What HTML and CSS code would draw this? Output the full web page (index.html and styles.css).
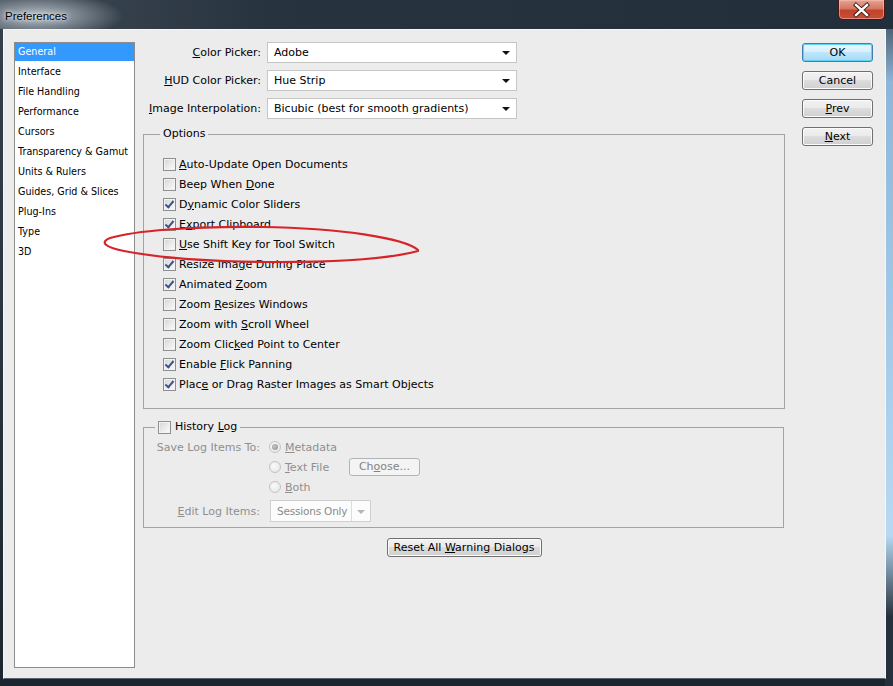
FILE: index.html
```html
<!DOCTYPE html>
<html>
<head>
    <title>Preferences</title>
    <link rel="stylesheet" href="styles.css">
</head>
<body>
<div class="window">
    <div class="titlebar">
        <span class="title">Preferences</span>
        <div class="close">
            <svg width="47" height="20" viewBox="0 0 47 20">
                <path d="M18 5 L29 15 M29 5 L18 15" stroke="#3a1410" stroke-width="4.2" stroke-linecap="square"/>
                <path d="M18 5 L29 15 M29 5 L18 15" stroke="#fff" stroke-width="2.4" stroke-linecap="square"/>
            </svg>
        </div>
    </div>

    <div class="client">
        <ul class="sidebar">
            <li class="selected">General</li>
            <li>Interface</li>
            <li>File Handling</li>
            <li>Performance</li>
            <li>Cursors</li>
            <li>Transparency &amp; Gamut</li>
            <li>Units &amp; Rulers</li>
            <li>Guides, Grid &amp; Slices</li>
            <li>Plug-Ins</li>
            <li>Type</li>
            <li>3D</li>
        </ul>

        <div class="main">
            <div class="picker-row">
                <label><u>C</u>olor Picker:</label>
                <div class="select"><span>Adobe</span><i class="arrow"></i></div>
            </div>
            <div class="picker-row">
                <label><u>H</u>UD Color Picker:</label>
                <div class="select"><span>Hue Strip</span><i class="arrow"></i></div>
            </div>
            <div class="picker-row">
                <label><u>I</u>mage Interpolation:</label>
                <div class="select"><span>Bicubic (best for smooth gradients)</span><i class="arrow"></i></div>
            </div>

            <fieldset class="group options">
                <legend>Options</legend>
                <div class="check-row"><span class="checkbox"></span><span><u>A</u>uto-Update Open Documents</span></div>
                <div class="check-row"><span class="checkbox"></span><span>Beep When <u>D</u>one</span></div>
                <div class="check-row"><span class="checkbox checked"></span><span>D<u>y</u>namic Color Sliders</span></div>
                <div class="check-row"><span class="checkbox checked"></span><span>E<u>x</u>port Clipboard</span></div>
                <div class="check-row"><span class="checkbox"></span><span><u>U</u>se Shift Key for Tool Switch</span></div>
                <div class="check-row"><span class="checkbox checked"></span><span>Resize Ima<u>g</u>e During Place</span></div>
                <div class="check-row"><span class="checkbox checked"></span><span>Animated <u>Z</u>oom</span></div>
                <div class="check-row"><span class="checkbox"></span><span>Zoom <u>R</u>esizes Windows</span></div>
                <div class="check-row"><span class="checkbox"></span><span>Zoom with <u>S</u>croll Wheel</span></div>
                <div class="check-row"><span class="checkbox"></span><span>Zoom Clic<u>k</u>ed Point to Center</span></div>
                <div class="check-row"><span class="checkbox checked"></span><span>Enable <u>F</u>lick Panning</span></div>
                <div class="check-row"><span class="checkbox checked"></span><span>Plac<u>e</u> or Drag Raster Images as Smart Objects</span></div>
            </fieldset>

            <fieldset class="group history">
                <legend><span class="checkbox"></span><span>History <u>L</u>og</span></legend>
                <div class="log-row">
                    <span class="log-label">Save Log Items To:</span>
                    <span class="radio-opt"><span class="radio on"></span><span><u>M</u>etadata</span></span>
                </div>
                <div class="log-row">
                    <span class="log-label"></span>
                    <span class="radio-opt"><span class="radio"></span><span><u>T</u>ext File</span></span>
                    <button class="btn choose">Ch<u>o</u>ose...</button>
                </div>
                <div class="log-row">
                    <span class="log-label"></span>
                    <span class="radio-opt"><span class="radio"></span><span><u>B</u>oth</span></span>
                </div>
                <div class="log-row tall">
                    <span class="log-label"><u>E</u>dit Log Items:</span>
                    <div class="select small"><span>Sessions Only</span><i class="arrow"></i></div>
                </div>
            </fieldset>

            <div class="reset-row">
                <button class="btn reset">Reset All <u>W</u>arning Dialogs</button>
            </div>
        </div>

        <div class="actions">
            <button class="btn default">OK</button>
            <button class="btn">Cancel</button>
            <button class="btn"><u>P</u>rev</button>
            <button class="btn"><u>N</u>ext</button>
        </div>
    </div>

    <!-- red marker ring drawn over the dialog -->
    <svg class="annotation" width="893" height="686" viewBox="0 0 893 686">
        <path d="M418 250 C404 238 340 228 262 227 C190 226 134 231 110 238 C100 242 104 247 124 251 C160 258 220 262 280 262 C340 262 392 258 418 251"
              fill="none" stroke="#d6242a" stroke-width="2.2" stroke-linecap="round"/>
    </svg>
</div>
</body>
</html>
```

FILE: styles.css
```css
body {
    margin: 0;
    font-family: "DejaVu Sans", Verdana, sans-serif;
    font-size: 11px;
    color: #000;
    background: #1c2732;
}
.window {
    position: relative;
    width: 893px;
    height: 686px;
    display: flex;
    flex-direction: column;
    background:
        linear-gradient(to bottom, #2a3742 0, #8fb6d8 12%, #b6daf5 78%, #24303b 90%) right top / 8px 100% no-repeat,
        linear-gradient(to bottom, #34414d, #1c2631);
}
.titlebar {
    height: 29px;
    flex: none;
    display: flex;
    justify-content: space-between;
    align-items: flex-start;
    padding-right: 8px;
    background:
        radial-gradient(ellipse 85px 24px at 38px 16px, rgba(190,197,204,0.95) 0, rgba(150,160,170,0.6) 55%, rgba(60,72,84,0) 100%),
        linear-gradient(to right, #3f4a55 0, #27333e 30%, #222e39 100%);
}
.title {
    font-family: "Liberation Sans", Arial, sans-serif;
    font-size: 11.5px;
    margin: 10px 0 0 5px;
    text-shadow: 0 0 6px #e8ecef, 0 0 3px #e8ecef;
}
.close {
    width: 47px;
    height: 20px;
    border: 1px solid #4a1a12;
    border-top: none;
    border-radius: 0 0 5px 5px;
    box-sizing: border-box;
    background: linear-gradient(to bottom, #e6a392 0, #d47863 45%, #c4412b 55%, #c8503a 100%);
    box-shadow: inset 0 0 0 1px rgba(255,200,190,0.5);
}
.close svg {
    display: block;
    margin-left: -1px;
}
.client {
    flex: 1;
    margin: 0 7px 7px 3px;
    background: #ececec;
    border: 1px solid #f4f6f8;
    border-bottom-color: #5a636c;
    display: flex;
    align-items: flex-start;
    padding: 12px 0 0 10px;
}

/* category list */
.sidebar {
    list-style: none;
    margin: 0;
    padding: 0;
    width: 121px;
    height: 626px;
    box-sizing: border-box;
    border: 1px solid #8c8c8c;
    background: #fff;
    font-size: 9.6px;
}
.sidebar li {
    height: 18px;
    line-height: 18px;
    margin-bottom: 2px;
    padding-left: 3px;
    white-space: nowrap;
}
.sidebar li.selected {
    background: #3399ff;
    color: #fff;
}

/* middle column */
.main {
    width: 642px;
    margin-left: 8px;
}
.picker-row {
    display: flex;
    align-items: center;
    height: 21px;
    margin-bottom: 7px;
}
.picker-row label {
    width: 118px;
    margin-right: 6px;
    text-align: right;
    white-space: nowrap;
}
.select {
    width: 250px;
    height: 21px;
    box-sizing: border-box;
    border: 1px solid #c6c6c6;
    background: #fff;
    display: flex;
    align-items: center;
    padding-left: 6px;
}
.select span {
    flex: 1;
    white-space: nowrap;
}
.arrow {
    width: 0;
    height: 0;
    border-left: 4px solid transparent;
    border-right: 4px solid transparent;
    border-top: 4px solid #111;
    margin: 1px 6px 0 0;
}
.group {
    margin: 8px 0 0;
    border: 1px solid #a3a3a3;
    min-width: 0;
}
.group legend {
    line-height: 14px;
    padding: 0 3px;
}
.options {
    padding: 13px 0 14px 19px;
}
.options legend {
    margin-left: -3px;
}
.check-row {
    display: flex;
    align-items: center;
    height: 20px;
    white-space: nowrap;
}
.checkbox {
    position: relative;
    width: 13px;
    height: 13px;
    flex: none;
    box-sizing: border-box;
    border: 1px solid #8e8f8f;
    background: linear-gradient(135deg, #d4d4d4 0, #e9e9e9 50%, #fbfbfb 100%);
    box-shadow: inset 0 0 0 1px #f3f3f3;
    margin-right: 3px;
}
.checkbox.checked::after {
    content: "";
    position: absolute;
    left: 3px;
    top: 0;
    width: 3px;
    height: 7px;
    border-right: 2px solid #3d5488;
    border-bottom: 2px solid #3d5488;
    transform: rotate(40deg);
}

/* history log */
.history {
    margin-top: 11px;
    padding: 3px 0 5px 0;
    width: 641px;
    box-sizing: border-box;
    color: #8f8f8f;
}
.history legend {
    margin-left: 11px;
    color: #000;
    display: flex;
    align-items: center;
}
.history legend .checkbox {
    margin-right: 4px;
}
.log-row {
    display: flex;
    align-items: center;
    height: 20px;
    white-space: nowrap;
}
.log-row.tall {
    height: 22px;
    margin-top: 3px;
}
.log-label {
    width: 116px;
    margin-right: 9px;
    text-align: right;
}
.radio-opt {
    display: inline-flex;
    align-items: center;
    width: 80px;
}
.radio {
    position: relative;
    width: 12px;
    height: 12px;
    box-sizing: border-box;
    border: 1px solid #c3c3c3;
    border-radius: 50%;
    background: radial-gradient(circle at 40% 40%, #fafafa, #e2e2e2);
    margin-right: 4px;
}
.radio.on::after {
    content: "";
    position: absolute;
    left: 2px;
    top: 2px;
    width: 6px;
    height: 6px;
    border-radius: 50%;
    background: radial-gradient(circle at 40% 40%, #c4c4c4, #8a8a8a);
}
.select.small {
    width: 101px;
    height: 22px;
    margin-left: 1px;
    border-color: #cfcfcf;
    background: #fcfcfc;
    color: #8a8a8a;
    padding-left: 6px;
}
.select.small span {
    font-size: 10.5px;
    letter-spacing: -0.2px;
    overflow: hidden;
    border-right: 1px solid #dcdcdc;
    height: 100%;
    line-height: 20px;
}
.select.small .arrow {
    border-top-color: #b5b5b5;
    margin: 1px 5px 0 5px;
}

/* buttons */
.btn {
    font: inherit;
    color: #000;
    height: 19px;
    padding: 0;
    box-sizing: border-box;
    border: 1px solid #707070;
    border-radius: 3px;
    background: linear-gradient(to bottom, #f2f2f2 0, #ebebeb 45%, #dddddd 50%, #cfcfcf 100%);
    box-shadow: inset 0 0 0 1px #fbfbfb;
    line-height: 16px;
}
.btn.default {
    border-color: #3c7fb1;
    background: linear-gradient(to bottom, #eaf6fd 0, #d9f0fc 45%, #bee6fd 50%, #a7d9f5 100%);
    box-shadow: inset 0 0 0 1px #5fd3f5;
}
.btn.choose {
    width: 71px;
    height: 18px;
    color: #838383;
    border-color: #b0b5b8;
    background: #f4f4f4;
    box-shadow: none;
}
.reset-row {
    display: flex;
    justify-content: center;
    margin-top: 10px;
}
.btn.reset {
    width: 155px;
}
.actions {
    width: 71px;
    margin-left: 17px;
    padding-top: 1px;
    display: flex;
    flex-direction: column;
    gap: 9px;
}
.annotation {
    position: absolute;
    left: 0;
    top: 0;
    pointer-events: none;
}
```
